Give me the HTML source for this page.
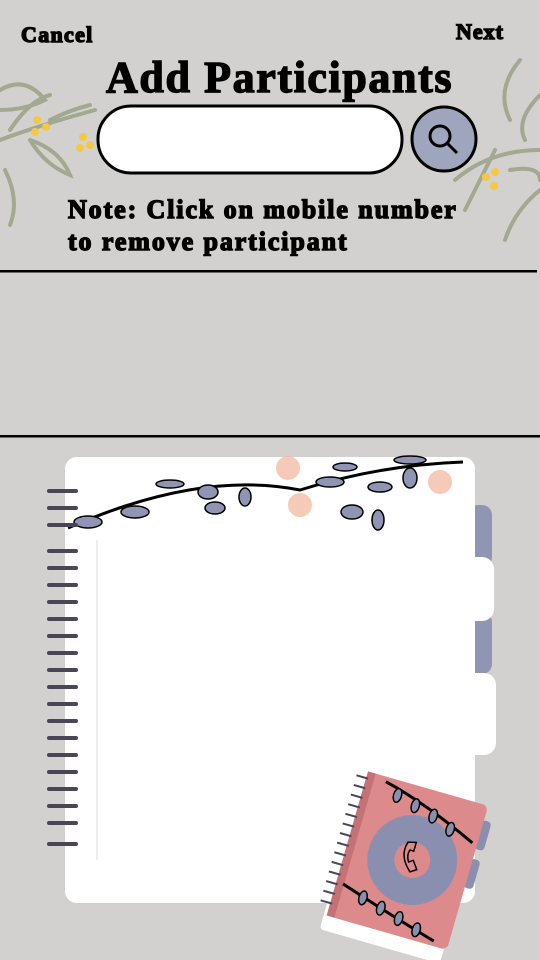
<!DOCTYPE html>
<html><head><meta charset="utf-8"><style>
body{margin:0;width:540px;height:960px;background:#d2d1cf;position:relative;overflow:hidden;font-family:"Liberation Serif",serif}
.t{position:absolute;color:#000;font-weight:bold;white-space:nowrap;-webkit-text-stroke:1.4px #000}
</style></head><body>
<svg width="540" height="960" style="position:absolute;left:0;top:0">
<g fill="none" stroke="#a3a890" stroke-width="4" stroke-linecap="round">
<path d="M0 140 Q40 125 95 110"/><path d="M0 90 Q25 75 45 100 Q25 110 0 110"/><path d="M10 130 Q30 100 50 95"/><path d="M30 140 Q60 150 70 175 Q45 165 30 140"/><path d="M5 170 Q20 200 10 225"/><path d="M50 120 Q70 110 90 105"/>
<path d="M540 150 Q490 150 455 180"/><path d="M520 60 Q495 90 510 120"/><path d="M540 95 Q515 120 525 140"/><path d="M495 150 Q480 180 465 210"/><path d="M540 190 Q515 210 505 240"/><path d="M510 170 Q540 165 540 180"/>
</g>
<g fill="#f4c842"><circle cx="37" cy="120" r="4"/><circle cx="46" cy="127" r="4"/><circle cx="35" cy="132" r="4"/><circle cx="83" cy="137" r="4"/><circle cx="90" cy="145" r="4"/><circle cx="80" cy="148" r="4"/><circle cx="486" cy="177" r="4"/><circle cx="495" cy="172" r="4"/><circle cx="494" cy="186" r="4"/></g>
<rect x="98" y="106" width="304" height="67" rx="33" fill="#fff" stroke="#000" stroke-width="3"/>
<circle cx="444" cy="139" r="32" fill="#9ea5bd" stroke="#000" stroke-width="3"/>
<circle cx="440" cy="136" r="10" fill="none" stroke="#000" stroke-width="3"/><path d="M447 143 L457 153" stroke="#000" stroke-width="3"/>
<rect x="0" y="270" width="537" height="2.5" fill="#000"/><rect x="0" y="435" width="540" height="2.5" fill="#000"/>
<rect x="468" y="505" width="24" height="62" rx="10" fill="#9095b3"/><rect x="468" y="612" width="24" height="62" rx="10" fill="#9095b3"/>
<rect x="460" y="557" width="34" height="64" rx="12" fill="#fff"/><rect x="460" y="673" width="36" height="82" rx="12" fill="#fff"/>
<rect x="65" y="457" width="410" height="446" rx="12" fill="#fff"/>
<line x1="97" y1="540" x2="97" y2="860" stroke="#eee" stroke-width="2"/>
<path d="M68 528 Q200 470 300 490 Q380 465 463 462" fill="none" stroke="#000" stroke-width="3"/>
<g fill="#9095b3" stroke="#000" stroke-width="1.5">
<ellipse cx="88" cy="522" rx="14" ry="6"/><ellipse cx="135" cy="512" rx="14" ry="6"/><ellipse cx="208" cy="492" rx="10" ry="7"/><ellipse cx="215" cy="508" rx="10" ry="6"/><ellipse cx="245" cy="497" rx="6" ry="9"/><ellipse cx="330" cy="482" rx="14" ry="5"/><ellipse cx="352" cy="512" rx="11" ry="7"/><ellipse cx="378" cy="520" rx="6" ry="10"/><ellipse cx="410" cy="478" rx="7" ry="10"/><ellipse cx="380" cy="487" rx="12" ry="5"/><ellipse cx="410" cy="460" rx="16" ry="4"/><ellipse cx="170" cy="484" rx="14" ry="4"/><ellipse cx="345" cy="467" rx="12" ry="4"/>
</g>
<g fill="#f2b49a"><circle cx="288" cy="468" r="12" opacity=".7"/><circle cx="300" cy="505" r="12" opacity=".7"/><circle cx="440" cy="482" r="12" opacity=".7"/></g>
<g transform="rotate(16 405 860)">
<rect x="468" y="800" width="10" height="30" rx="4" fill="#8a8faf"/><rect x="468" y="840" width="10" height="30" rx="4" fill="#8a8faf"/>
<rect x="342" y="800" width="125" height="150" rx="4" fill="#fff"/>
<rect x="345" y="785" width="125" height="150" rx="6" fill="#dc8a8c"/>
<rect x="345" y="785" width="8" height="150" fill="#c47276"/>
<circle cx="412" cy="858" r="45" fill="#8a8faf"/><circle cx="412" cy="858" r="18" fill="#dc8a8c"/>
<path d="M403 842 q-5 15 10 28 l6 -4 -6 -8 -4 3 q-4 -6 -2 -12 l4 0 0 -9z" fill="none" stroke="#000" stroke-width="1.5"/>
<path d="M365 790 Q410 800 465 825 M352 900 Q400 915 455 930" stroke="#000" stroke-width="3" fill="none"/>
<g fill="#8a8faf" stroke="#000" stroke-width="1.5"><ellipse cx="380" cy="800" rx="4" ry="7"/><ellipse cx="400" cy="805" rx="4" ry="7"/><ellipse cx="420" cy="810" rx="4" ry="7"/><ellipse cx="440" cy="818" rx="4" ry="7"/><ellipse cx="375" cy="908" rx="4" ry="7"/><ellipse cx="395" cy="913" rx="4" ry="7"/><ellipse cx="415" cy="918" rx="4" ry="7"/><ellipse cx="435" cy="924" rx="4" ry="7"/></g>
<g stroke="#4a4658" stroke-width="2">
<line x1="335" y1="792" x2="347" y2="792"/><line x1="335" y1="802" x2="347" y2="802"/><line x1="335" y1="812" x2="347" y2="812"/><line x1="335" y1="822" x2="347" y2="822"/><line x1="335" y1="832" x2="347" y2="832"/><line x1="335" y1="842" x2="347" y2="842"/><line x1="335" y1="852" x2="347" y2="852"/><line x1="335" y1="862" x2="347" y2="862"/><line x1="335" y1="872" x2="347" y2="872"/><line x1="335" y1="882" x2="347" y2="882"/><line x1="335" y1="892" x2="347" y2="892"/><line x1="335" y1="902" x2="347" y2="902"/><line x1="335" y1="912" x2="347" y2="912"/><line x1="335" y1="922" x2="347" y2="922"/></g>
</g>
<g stroke="#4a4658" stroke-width="4" stroke-linecap="round">
<line x1="49" y1="491" x2="76" y2="491"/><line x1="49" y1="508" x2="76" y2="508"/><line x1="49" y1="525" x2="76" y2="525"/><line x1="49" y1="551" x2="76" y2="551"/><line x1="49" y1="568" x2="76" y2="568"/><line x1="49" y1="585" x2="76" y2="585"/><line x1="49" y1="602" x2="76" y2="602"/><line x1="49" y1="619" x2="76" y2="619"/><line x1="49" y1="636" x2="76" y2="636"/><line x1="49" y1="653" x2="76" y2="653"/><line x1="49" y1="670" x2="76" y2="670"/><line x1="49" y1="687" x2="76" y2="687"/><line x1="49" y1="704" x2="76" y2="704"/><line x1="49" y1="721" x2="76" y2="721"/><line x1="49" y1="738" x2="76" y2="738"/><line x1="49" y1="755" x2="76" y2="755"/><line x1="49" y1="772" x2="76" y2="772"/><line x1="49" y1="789" x2="76" y2="789"/><line x1="49" y1="806" x2="76" y2="806"/><line x1="49" y1="823" x2="76" y2="823"/><line x1="49" y1="844" x2="76" y2="844"/></g>
</svg>
<div class="t" style="left:21px;top:22px;font-size:22px;letter-spacing:1.3px">Cancel</div>
<div class="t" style="left:456px;top:19px;font-size:22px;letter-spacing:1px">Next</div>
<div class="t" style="left:106px;top:52px;font-size:44px;letter-spacing:1.6px">Add Participants</div>
<div class="t" style="left:68px;top:194px;font-size:26px;line-height:32px;letter-spacing:1.9px">Note: Click on mobile number<br>to remove participant</div>
</body></html>
